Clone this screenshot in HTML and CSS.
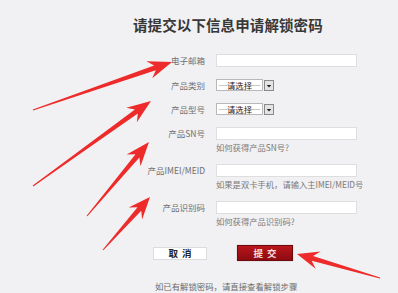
FILE: index.html
```html
<!DOCTYPE html>
<html lang="zh-CN">
<head>
<meta charset="utf-8">
<title>申请解锁密码</title>
<link rel="stylesheet" href="styles.css">
</head>
<body>
<div class="page">
  <h1 class="title">请提交以下信息申请解锁密码</h1>
  <div class="form">
    <div class="row">
      <label class="lbl">电子邮箱</label>
      <div class="field"><div class="input"></div></div>
    </div>
    <div class="row">
      <label class="lbl lbl-sel">产品类别</label>
      <div class="field">
        <div class="select"><span class="select-text">─请选择─</span><span class="select-btn"><svg viewBox="0 0 8 8" width="6" height="6"><path d="M1 2.5h6L4 6z" fill="#222"/></svg></span></div>
      </div>
    </div>
    <div class="row">
      <label class="lbl lbl-sel">产品型号</label>
      <div class="field">
        <div class="select"><span class="select-text">─请选择─</span><span class="select-btn"><svg viewBox="0 0 8 8" width="6" height="6"><path d="M1 2.5h6L4 6z" fill="#222"/></svg></span></div>
      </div>
    </div>
    <div class="row">
      <label class="lbl">产品SN号</label>
      <div class="field"><div class="input"></div><div class="hint">如何获得产品SN号?</div></div>
    </div>
    <div class="row">
      <label class="lbl">产品IMEI/MEID</label>
      <div class="field"><div class="input"></div><div class="hint">如果是双卡手机，请输入主IMEI/MEID号</div></div>
    </div>
    <div class="row">
      <label class="lbl">产品识别码</label>
      <div class="field"><div class="input"></div><div class="hint">如何获得产品识别码?</div></div>
    </div>
  </div>
  <div class="actions">
    <button class="btn btn-cancel">取消</button>
    <button class="btn btn-submit">提交</button>
  </div>
  <p class="note">如已有解锁密码，请直接查看解锁步骤</p>
</div>
<svg class="arrows" viewBox="0 0 398 293" width="398" height="293">
  <polygon points="33.16,110.47 155.80,70.24 152.25,78.34 172,62 146.37,61.32 154.16,65.52 32.84,109.53"/>
  <polygon points="33.29,186.41 137.85,113.55 136.79,122.33 151,101 126.27,107.73 134.93,109.49 32.71,185.59"/>
  <polygon points="87.38,216.32 139.36,157.41 140.49,166.18 149,142 126.69,154.62 135.52,154.19 86.62,215.68"/>
  <polygon points="103.37,250.33 141.25,210.63 142.13,219.43 150,197 128.67,207.49 137.51,207.31 102.63,249.67"/>
  <polygon points="380.14,277.52 313.06,256.04 320.63,251.46 297,254 315.63,268.76 311.68,260.84 379.86,278.48"/>
</svg>
</body>
</html>
```
FILE: styles.css
```css
html, body {
  margin: 0;
  padding: 0;
}
body {
  width: 398px;
  height: 293px;
  overflow: hidden;
  position: relative;
  background: #f1f0f2;
  font-family: "Noto Sans CJK SC", "Noto Sans", sans-serif;
}
.page {
  padding-top: 17px;
}
.title {
  margin: 0 0 0 133px;
  font-size: 14.5px;
  line-height: 16px;
  font-weight: 700;
  color: #383838;
  letter-spacing: 0.1px;
}
.form {
  margin-top: 21px;
  margin-left: 140px;
  display: flex;
  flex-direction: column;
  gap: 12px;
}
.row {
  display: flex;
  align-items: flex-start;
  gap: 11px;
}
.lbl {
  width: 65px;
  flex: none;
  text-align: right;
  font-size: 8.5px;
  line-height: 13px;
  color: #707070;
  white-space: nowrap;
}
.lbl-sel {
  line-height: 12px;
}
.field {
  display: flex;
  flex-direction: column;
}
.input {
  width: 141px;
  height: 13px;
  box-sizing: border-box;
  background: #fff;
  border: 1px solid #dedede;
}
.hint {
  margin-top: 2px;
  font-size: 8.3px;
  line-height: 10px;
  color: #7a7a7a;
  white-space: nowrap;
}
.select {
  display: flex;
  height: 12px;
  gap: 1px;
}
.select-text {
  width: 47px;
  box-sizing: border-box;
  height: 12px;
  background: #fff;
  border: 1px solid #b8b8b8;
  font-size: 8.3px;
  line-height: 10px;
  color: #222;
  white-space: nowrap;
  overflow: hidden;
  text-align: center;
}
.select-btn {
  width: 10px;
  height: 11px;
  box-sizing: border-box;
  border: 1px solid #8a8a8a;
  background: #e4e4e4;
  display: flex;
  align-items: center;
  justify-content: center;
  margin-top: 1px;
}
.actions {
  margin-top: 19px;
  margin-left: 153px;
  display: flex;
  align-items: center;
  gap: 30px;
}
.btn {
  font-family: "Noto Sans CJK SC", "Noto Sans", sans-serif;
  font-size: 9.5px;
  font-weight: 700;
  letter-spacing: 4px;
  padding: 0 0 0 4px;
  box-sizing: border-box;
  cursor: pointer;
}
.btn-cancel {
  width: 54px;
  height: 13px;
  line-height: 11px;
  background: #fff;
  border: 1px solid #dcdcdc;
  color: #222;
}
.btn-submit {
  width: 56px;
  height: 16px;
  line-height: 14px;
  background: linear-gradient(#b8161c, #8c0b10);
  border: 1px solid #6e0a0c;
  color: #f3dede;
  box-shadow: 0 0 1px rgba(0,0,0,0.3);
}
.note {
  margin: 20px 0 0 155px;
  font-size: 8.4px;
  line-height: 10px;
  color: #6a6a6a;
  white-space: nowrap;
}
.arrows {
  position: absolute;
  left: 0;
  top: 0;
  pointer-events: none;
}
.arrows polygon {
  fill: #ee2b2b;
}
```
